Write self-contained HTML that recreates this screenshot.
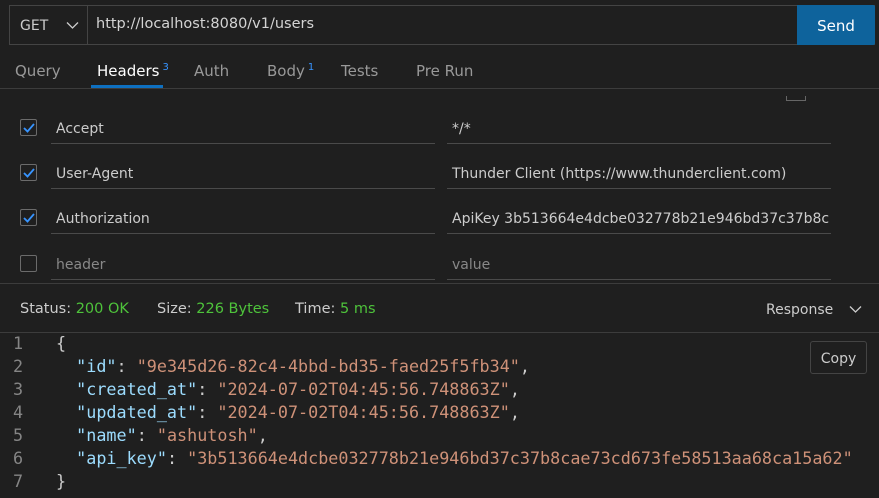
<html><head><style>
body{margin:0;width:879px;height:498px;background:#1f1f1f;font-family:"DejaVu Sans","Liberation Sans",sans-serif;color:#ccc;position:relative;overflow:hidden;font-size:14px}
.a{position:absolute;white-space:nowrap}
.ln{position:absolute;left:0;right:0;height:1px;background:#3c3c3c}
.cb{position:absolute;left:20px;width:17px;height:17px;border:1px solid #6b6b6b;border-radius:2px;box-sizing:border-box}
.in{position:absolute;height:1px;background:#4a4a4a}
.code{position:absolute;left:0;top:332px;font-family:"DejaVu Sans Mono","Liberation Mono",monospace;font-size:16.75px;line-height:23px}
.code div{white-space:pre}
.n{display:inline-block;width:56px;padding-left:13px;box-sizing:border-box;color:#858585}
.k{color:#9cdcfe}.s{color:#ce9178}
</style></head><body>
<div class="a" style="left:9px;top:5px;width:866px;height:40px;border:1px solid #444;box-sizing:border-box"></div>
<div class="a" style="left:87px;top:5px;width:1px;height:40px;background:#444"></div>
<div class="a" style="left:20px;top:18px;font-size:14px;color:#ccc">GET</div>
<svg class="a" style="left:66px;top:21px" width="13" height="9"><path d="M1 1.5L6.5 7L12 1.5" stroke="#ccc" fill="none" stroke-width="1.3"/></svg>
<div class="a" style="left:96px;top:16px;font-size:14.5px;color:#d4d4d4">http://localhost:8080/v1/users</div>
<div class="a" style="left:797px;top:5px;width:78px;height:40px;background:#0e639c;border-radius:0 2px 2px 0;color:#fff;font-size:15px;text-align:center;line-height:42px">Send</div>
<div class="a" style="left:15px;top:62px;font-size:15px;color:#999">Query</div>
<div class="a" style="left:97px;top:62px;font-size:15px;color:#fff">Headers<sup style="color:#3794ff;font-size:10px;margin-left:3px">3</sup></div>
<div class="a" style="left:194px;top:62px;font-size:15px;color:#999">Auth</div>
<div class="a" style="left:267px;top:62px;font-size:15px;color:#999">Body<sup style="color:#3794ff;font-size:10px;margin-left:3px">1</sup></div>
<div class="a" style="left:341px;top:62px;font-size:15px;color:#999">Tests</div>
<div class="a" style="left:416px;top:62px;font-size:15px;color:#999">Pre Run</div>
<div class="a" style="left:91px;top:85px;width:72px;height:3px;background:#0e70c0"></div>
<div class="ln" style="top:88px"></div>
<div class="a" style="left:786px;top:96px;width:18px;height:4px;border:1px solid #666;border-top:none"></div>
<div class="cb" style="top:119px"><svg width="15" height="15"><path d="M3 8L6.5 11.5L13 4" stroke="#3794ff" stroke-width="1.8" fill="none"/></svg></div>
<div class="cb" style="top:164px"><svg width="15" height="15"><path d="M3 8L6.5 11.5L13 4" stroke="#3794ff" stroke-width="1.8" fill="none"/></svg></div>
<div class="cb" style="top:209px"><svg width="15" height="15"><path d="M3 8L6.5 11.5L13 4" stroke="#3794ff" stroke-width="1.8" fill="none"/></svg></div>
<div class="cb" style="top:255px"></div>
<div class="a" style="left:56px;top:121px">Accept</div><div class="a" style="left:452px;top:121px">*/*</div>
<div class="a" style="left:56px;top:166px">User-Agent</div><div class="a" style="left:452px;top:166px">Thunder Client (https://www.thunderclient.com)</div>
<div class="a" style="left:56px;top:211px">Authorization</div><div class="a" style="left:452px;top:211px;width:378px;overflow:hidden">ApiKey 3b513664e4dcbe032778b21e946bd37c37b8cae73cd673</div>
<div class="a" style="left:56px;top:257px;color:#888">header</div><div class="a" style="left:452px;top:257px;color:#888">value</div>
<div class="in" style="left:51px;width:384px;top:143px"></div><div class="in" style="left:447px;width:384px;top:143px"></div>
<div class="in" style="left:51px;width:384px;top:188px"></div><div class="in" style="left:447px;width:384px;top:188px"></div>
<div class="in" style="left:51px;width:384px;top:233px"></div><div class="in" style="left:447px;width:384px;top:233px"></div>
<div class="in" style="left:51px;width:384px;top:279px"></div><div class="in" style="left:447px;width:384px;top:279px"></div>
<div class="ln" style="top:283px"></div>
<div class="a" style="left:20px;top:301px;font-size:14.5px">Status: <span style="color:#4ec33b">200 OK</span></div>
<div class="a" style="left:157px;top:301px;font-size:14.5px">Size: <span style="color:#4ec33b">226 Bytes</span></div>
<div class="a" style="left:295px;top:301px;font-size:14.5px">Time: <span style="color:#4ec33b">5 ms</span></div>
<div class="a" style="left:766px;top:302px;font-size:14px">Response</div>
<svg class="a" style="left:849px;top:305px" width="13" height="9"><path d="M1 1.5L6.5 7L12 1.5" stroke="#ccc" fill="none" stroke-width="1.3"/></svg>
<div class="ln" style="top:332px"></div>
<div class="code">
<div><span class="n">1</span>{</div>
<div><span class="n">2</span>  <span class="k">"id"</span>: <span class="s">"9e345d26-82c4-4bbd-bd35-faed25f5fb34"</span>,</div>
<div><span class="n">3</span>  <span class="k">"created_at"</span>: <span class="s">"2024-07-02T04:45:56.748863Z"</span>,</div>
<div><span class="n">4</span>  <span class="k">"updated_at"</span>: <span class="s">"2024-07-02T04:45:56.748863Z"</span>,</div>
<div><span class="n">5</span>  <span class="k">"name"</span>: <span class="s">"ashutosh"</span>,</div>
<div><span class="n">6</span>  <span class="k">"api_key"</span>: <span class="s">"3b513664e4dcbe032778b21e946bd37c37b8cae73cd673fe58513aa68ca15a62"</span></div>
<div><span class="n">7</span>}</div>
</div>
<div class="a" style="left:810px;top:341px;width:57px;height:33px;border:1px solid #444;border-radius:3px;box-sizing:border-box;text-align:center;line-height:35px;font-size:14px;background:#1f1f1f">Copy</div>
</body></html>
